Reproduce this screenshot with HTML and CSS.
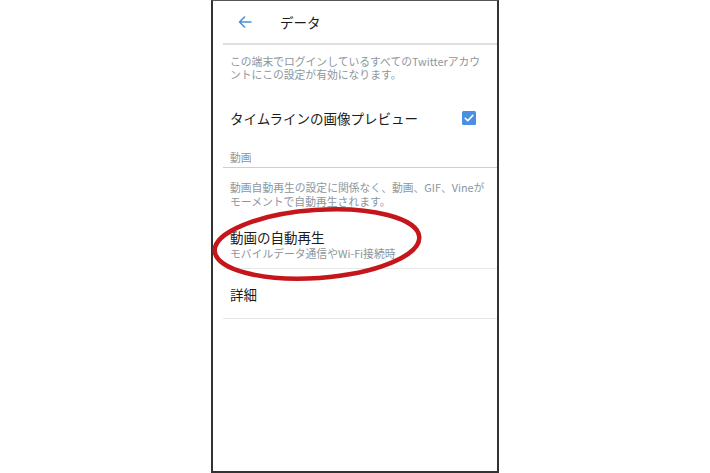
FILE: index.html
```html
<!DOCTYPE html>
<html lang="ja">
<head>
<meta charset="utf-8">
<title>データ</title>
<link rel="stylesheet" href="styles.css">
</head>
<body>
<div class="page">
  <div class="screen">
    <div class="content">
      <header class="appbar">
        <svg class="back" width="14" height="12" viewBox="0 0 14 12">
          <path d="M13 6H1.5M6.5 1L1.5 6l5 5" fill="none" stroke="#4a90d9" stroke-width="1.6" stroke-linecap="round" stroke-linejoin="round"/>
        </svg>
        <h1 class="title">データ</h1>
      </header>
      <p class="desc desc-first"><span class="line">この端末でログインしているすべてのTwitterアカウ</span><span class="line">ントにこの設定が有効になります。</span></p>
      <div class="row row-check">
        <span class="row-title">タイムラインの画像プレビュー</span>
        <span class="checkbox">
          <svg width="14" height="14" viewBox="0 0 14 14">
            <rect width="14" height="14" rx="1.5" fill="#4a8fe2"/>
            <path d="M3.2 7.2l2.6 2.6 5-5.4" fill="none" stroke="#fff" stroke-width="1.6" stroke-linecap="round" stroke-linejoin="round"/>
          </svg>
        </span>
      </div>
      <div class="section-label">動画</div>
      <p class="desc desc-second"><span class="line">動画自動再生の設定に関係なく、動画、GIF、Vineが</span><span class="line">モーメントで自動再生されます。</span></p>
      <div class="row row-two">
        <span class="row-title">動画の自動再生</span>
        <span class="row-sub">モバイルデータ通信やWi-Fi接続時</span>
      </div>
      <div class="row row-plain">
        <span class="row-title">詳細</span>
      </div>
    </div>
  </div>
  <svg class="mark" width="710" height="473" viewBox="0 0 710 473">
    <ellipse cx="317" cy="244" rx="102.5" ry="34" transform="rotate(-4 317 244)" fill="none" stroke="#c5161b" stroke-width="4.5"/>
  </svg>
</div>
</body>
</html>
```
FILE: styles.css
```css
html, body {
  margin: 0;
  padding: 0;
  background: #ffffff;
}

body {
  font-family: "Noto Sans CJK JP", "Noto Sans", sans-serif;
  color: #1c1c1c;
}

.page {
  position: relative;
  width: 710px;
  height: 473px;
  overflow: hidden;
}

.screen {
  margin-left: 211px;
  width: 284px;
  height: 470px;
  border: 2px solid #333333;
  border-top: 1px solid #555555;
  background: #ffffff;
}

.content {
  margin-left: 10px;
}

.appbar {
  display: flex;
  align-items: center;
  height: 42px;
  border-bottom: 2px solid #dedede;
}

.back {
  margin-left: 15px;
  display: block;
}

.title {
  margin: 0 0 0 28px;
  font-size: 13.5px;
  font-weight: 400;
  line-height: 18px;
  color: #1c1c1c;
}

.desc {
  margin: 0;
  padding-left: 7px;
  font-size: 10.8px;
  color: #8d969e;
  white-space: nowrap;
}

.desc .line {
  display: block;
}

.desc-first {
  padding-top: 10px;
  padding-bottom: 13px;
}

.desc-first .line {
  line-height: 13px;
}

.desc-second {
  padding-top: 12px;
  padding-bottom: 10px;
}

.desc-second .line {
  line-height: 14px;
}

.row {
  padding-left: 7px;
}

.row-title {
  font-size: 13.5px;
  line-height: 18px;
  color: #1c1c1c;
}

.row-check {
  display: flex;
  align-items: center;
  justify-content: space-between;
  height: 48px;
}

.checkbox {
  display: flex;
  margin-right: 21px;
}

.section-label {
  padding: 8px 0 3px 7px;
  font-size: 10.8px;
  line-height: 14px;
  color: #8d969e;
  border-bottom: 1px solid #cfcfcf;
}

.row-two {
  display: flex;
  flex-direction: column;
  padding-top: 10px;
  padding-bottom: 8px;
  border-bottom: 1px solid #e8e8e8;
}

.row-sub {
  font-size: 10.8px;
  line-height: 14px;
  color: #8d969e;
}

.row-plain {
  display: flex;
  align-items: center;
  height: 49px;
  border-bottom: 1px solid #e8e8e8;
}

.mark {
  position: absolute;
  left: 0;
  top: 0;
  pointer-events: none;
}
```
